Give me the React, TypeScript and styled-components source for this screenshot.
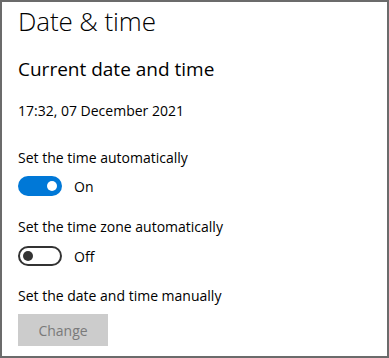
import React from "react";
import styled, { createGlobalStyle } from "styled-components";

const Global = createGlobalStyle`
  html, body { margin: 0; padding: 0; background: #fff; }
  * { box-sizing: border-box; }
`;

const Frame = styled.div`
  width: 389px;
  height: 358px;
  border: 2px solid #6b6b6b;
  background: #fff;
  padding: 1px 0 0 16px;
  font-family: "Open Sans", "Noto Sans", sans-serif;
  color: #000;
  display: flex;
  flex-direction: column;
  overflow: hidden;
`;

const Title = styled.h1`
  margin: 0;
  font-weight: 300;
  font-size: 26px;
  line-height: 36px;
  letter-spacing: -0.1px;
`;

const Subtitle = styled.h2`
  margin: 16px 0 0;
  font-weight: 400;
  font-size: 19px;
  line-height: 28px;
`;

const Text = styled.div<{ $top: number }>`
  margin-top: ${(p) => p.$top}px;
  font-size: 14px;
  line-height: 20px;
`;

const ToggleRow = styled.div<{ $top: number }>`
  margin-top: ${(p) => p.$top}px;
  display: flex;
  align-items: center;
  gap: 12px;
  height: 20px;
  font-size: 14px;
`;

const Track = styled.div<{ $on: boolean }>`
  width: 44px;
  height: 20px;
  border-radius: 10px;
  display: flex;
  align-items: center;
  justify-content: ${(p) => (p.$on ? "flex-end" : "flex-start")};
  background: ${(p) => (p.$on ? "#0078d7" : "#fff")};
  border: ${(p) => (p.$on ? "none" : "2px solid #333")};
  padding: ${(p) => (p.$on ? "0 5px" : "0 3px")};
`;

const Knob = styled.div<{ $on: boolean }>`
  width: 10px;
  height: 10px;
  border-radius: 50%;
  background: ${(p) => (p.$on ? "#fff" : "#333")};
`;

const Button = styled.button`
  margin-top: 8px;
  width: 90px;
  height: 32px;
  border: none;
  background: #cccccc;
  color: #7a7a7a;
  font-family: inherit;
  font-size: 14px;
  padding: 0;
`;

const Toggle = ({ on, label, top }: { on: boolean; label: string; top: number }) => (
  <ToggleRow $top={top}>
    <Track $on={on}>
      <Knob $on={on} />
    </Track>
    <span>{label}</span>
  </ToggleRow>
);

export default function App() {
  return (
    <>
      <Global />
      <Frame>
        <Title>Date &amp; time</Title>
        <Subtitle>Current date and time</Subtitle>
        <Text $top={18}>17:32, 07 December 2021</Text>
        <Text $top={27}>Set the time automatically</Text>
        <Toggle on={true} label="On" top={8} />
        <Text $top={21}>Set the time zone automatically</Text>
        <Toggle on={false} label="Off" top={9} />
        <Text $top={20}>Set the date and time manually</Text>
        <Button>Change</Button>
      </Frame>
    </>
  );
}
